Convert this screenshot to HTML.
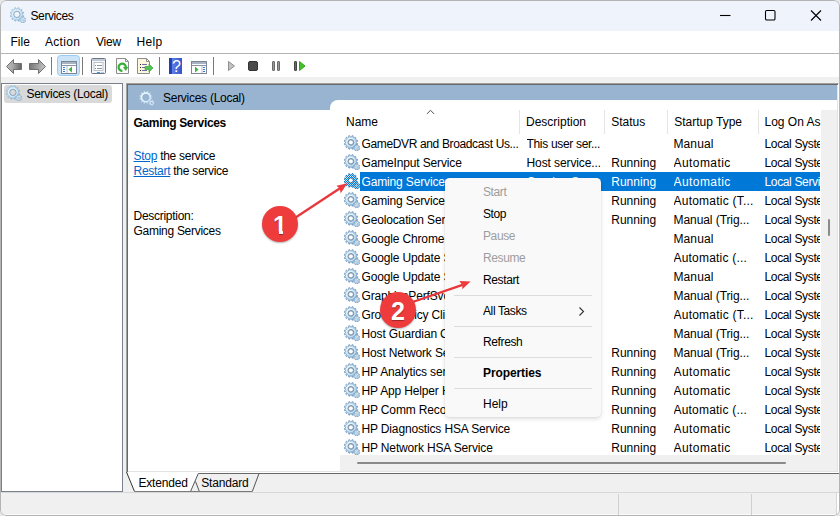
<!DOCTYPE html>
<html lang="en"><head><meta charset="utf-8"><title>Services</title>
<style>
html,body{margin:0;padding:0}
body{width:840px;height:516px;overflow:hidden;background:#e6e6e6;font-family:"Liberation Sans",sans-serif;font-size:12px;color:#000;position:relative}
.abs{position:absolute}
.win{position:absolute;left:0;top:0;width:840px;height:516px;border-radius:6px;background:#f0f0f0;overflow:hidden}
.winb{position:absolute;left:0;top:0;width:838px;height:514px;border:1px solid #b4b4b4;border-radius:6px;pointer-events:none}
.title{position:absolute;left:0;top:0;width:840px;height:31px;background:#eff3fb}
.title .tt{position:absolute;left:30.500px;top:9px;font-size:12px;line-height:14px;letter-spacing:-0.4px}
.menubar{position:absolute;left:0;top:31px;width:840px;height:22px;background:#fff}
.menubar span{position:absolute;top:4px;line-height:14px}
.tbline{position:absolute;left:0;top:53px;width:840px;height:1px;background:#b4b4b4}
.toolbar{position:absolute;left:0;top:54px;width:840px;height:23px;background:#fff}
.lpane{position:absolute;left:1px;top:83px;width:120px;height:407px;background:#fff;border:1px solid #7a808e}
.lsel{position:absolute;left:2px;top:1px;width:108px;height:18px;background:#d9d9d9;border-radius:3px}
.lsel span{position:absolute;left:22.500px;top:2px;line-height:14px;white-space:nowrap;letter-spacing:-0.29px}
.rpane{position:absolute;left:126px;top:83px;width:713px;height:390px;background:#fff;box-sizing:border-box;border-left:1px solid #a0a0a0;border-top:1px solid #a0a0a0;border-right:1px solid #fff;border-bottom:1px solid #fff;box-shadow:inset 1px 1px 0 #696969,inset -1px -1px 0 #e3e3e3}
.rhead{position:absolute;left:1px;top:1px;width:709px;height:25px;background:#99b4d1}
.rhead span{position:absolute;left:35px;top:6px;line-height:14px;white-space:nowrap;letter-spacing:-0.27px}
.ext b{position:absolute;left:6.500px;top:32px;line-height:14px;white-space:nowrap;letter-spacing:-0.33px}
.ext .t{position:absolute;left:6.500px;line-height:14px;white-space:nowrap;letter-spacing:-0.28px}
.ext u{color:#0066cc}
.list{position:absolute;left:330px;top:100px;width:507px;height:371px;background:#fff;border-top-left-radius:8px;overflow:hidden}
.hdr{position:absolute;top:15px;line-height:14px;white-space:nowrap}
.hsep{position:absolute;top:10px;width:1px;height:24px;background:#e5e5e5}
.row{position:absolute;left:0;width:490px;height:19px;white-space:nowrap}
.row .gi{position:absolute;left:14px;top:1px}
.row .c{position:absolute;top:3px;line-height:14px;overflow:hidden;white-space:nowrap}
.c1{left:31.500px;width:157px;letter-spacing:-0.15px}
.c2{left:196.500px;width:73px;letter-spacing:-0.1px}
.c3{left:281.200px;letter-spacing:0.03px}
.c4{left:343.500px;letter-spacing:0.1px}
.c5{left:434.500px;width:55.500px;letter-spacing:-0.35px}
.row.sel{color:#fff}
.row.sel::before{content:"";position:absolute;left:30px;top:0;width:460px;height:19px;background:#0078d7}
.vsb{position:absolute;left:491px;top:10px;width:16px;height:345px;background:#f0f0f0}
.vthumb{position:absolute;left:7px;top:109px;width:2px;height:17px;background:#8a8a8a;border-radius:1px}
.hsb{position:absolute;left:10px;top:355px;width:497px;height:16px;background:#f0f0f0}
.hthumb{position:absolute;left:17px;top:7px;width:429px;height:2px;background:#8a8a8a;border-radius:1px}
.tabs{position:absolute;left:126px;top:472px;width:713px;height:20px}
.status{position:absolute;left:0;top:492px;width:840px;height:24px;background:#f0f0f0;border-top:1px solid #d7d7d7;box-sizing:border-box;box-shadow:inset 0 -2px 0 #fbfbfb}
.ssep{position:absolute;top:1px;width:1px;height:21px;background:#d0d0d0}
.ctx{position:absolute;left:445px;top:178px;width:156px;height:239px;background:#f9f9f9;border-radius:4.500px;box-shadow:0 0 0 0.500px rgba(0,0,0,0.05),0 2px 4px rgba(0,0,0,0.13)}
.ctx span{position:absolute;left:38px;line-height:14px;white-space:nowrap;letter-spacing:-0.38px}
.ctx .dis{color:#9d9d9d}
.ctx i{position:absolute;left:9px;width:138px;height:1px;background:#dcdcdc}
.badge{position:absolute;width:36px;height:36px;border-radius:18px;background:#ee3b3b;color:#fff;font-weight:bold;font-size:25px;line-height:39px;text-align:center;box-shadow:0 1px 2px rgba(0,0,0,0.3);text-shadow:0 1px 1px rgba(0,0,0,0.35)}
.b1::before,.b1::after{content:"";position:absolute;top:24.500px;height:5.500px;background:#ee3b3b}
.b1::before{left:10px;width:7px}
.b1::after{left:21px;width:6px}
.status::after{content:"";position:absolute;left:836px;top:0;width:2px;height:22px;background:#fff;border-left:1px solid #d6d6d6}

</style></head>
<body>
<svg width="0" height="0" style="position:absolute">
<defs>
<radialGradient id="gearg" cx="0.45" cy="0.45" r="0.55"><stop offset="0.45" stop-color="#e6f6fd"/><stop offset="0.72" stop-color="#b5d9f0"/><stop offset="1" stop-color="#74a4d0"/></radialGradient>
<symbol id="gear" viewBox="0 0 16 16">
<path d="M12.27 7.96L13.70 8.55L13.37 9.81L11.83 9.60L11.27 10.57L12.22 11.80L11.30 12.72L10.07 11.77L9.10 12.33L9.31 13.87L8.05 14.20L7.46 12.77L6.34 12.77L5.75 14.20L4.49 13.87L4.70 12.33L3.73 11.77L2.50 12.72L1.58 11.80L2.53 10.57L1.97 9.60L0.43 9.81L0.10 8.55L1.53 7.96L1.53 6.84L0.10 6.25L0.43 4.99L1.97 5.20L2.53 4.23L1.58 3.00L2.50 2.08L3.73 3.03L4.70 2.47L4.49 0.93L5.75 0.60L6.34 2.03L7.46 2.03L8.05 0.60L9.31 0.93L9.10 2.47L10.07 3.03L11.30 2.08L12.22 3.00L11.27 4.23L11.83 5.20L13.37 4.99L13.70 6.25L12.27 6.84ZM4.50 7.40A2.4 2.4 0 1 0 9.30 7.40A2.4 2.4 0 1 0 4.50 7.40Z" fill="url(#gearg)" fill-rule="evenodd" stroke="#7397ba" stroke-width="0.7" stroke-linejoin="round"/>
<circle cx="6.9" cy="7.4" r="2.95" fill="none" stroke="#75879b" stroke-width="0.9"/>
<path d="M14.87 13.26L15.79 13.72L15.47 14.51L14.49 14.18L13.98 14.69L14.31 15.67L13.52 15.99L13.06 15.07L12.34 15.07L11.88 15.99L11.09 15.67L11.42 14.69L10.91 14.18L9.93 14.51L9.61 13.72L10.53 13.26L10.53 12.54L9.61 12.08L9.93 11.29L10.91 11.62L11.42 11.11L11.09 10.13L11.88 9.81L12.34 10.73L13.06 10.73L13.52 9.81L14.31 10.13L13.98 11.11L14.49 11.62L15.47 11.29L15.79 12.08L14.87 12.54ZM11.70 12.90A1.0 1.0 0 1 0 13.70 12.90A1.0 1.0 0 1 0 11.70 12.90Z" fill="url(#gearg)" fill-rule="evenodd" stroke="#7397ba" stroke-width="0.55" stroke-linejoin="round"/>
</symbol>
<radialGradient id="gearrg" cx="0.45" cy="0.45" r="0.55"><stop offset="0.5" stop-color="#dff3fc"/><stop offset="0.75" stop-color="#bfe2f5"/><stop offset="1" stop-color="#86b2d8"/></radialGradient>
<symbol id="gearr" viewBox="0 0 16 16">
<path d="M12.36 8.06L13.68 8.66L13.40 9.70L11.96 9.56L11.30 10.70L12.15 11.88L11.38 12.65L10.20 11.80L9.06 12.46L9.20 13.90L8.16 14.18L7.56 12.86L6.24 12.86L5.64 14.18L4.60 13.90L4.74 12.46L3.60 11.80L2.42 12.65L1.65 11.88L2.50 10.70L1.84 9.56L0.40 9.70L0.12 8.66L1.44 8.06L1.44 6.74L0.12 6.14L0.40 5.10L1.84 5.24L2.50 4.10L1.65 2.92L2.42 2.15L3.60 3.00L4.74 2.34L4.60 0.90L5.64 0.62L6.24 1.94L7.56 1.94L8.16 0.62L9.20 0.90L9.06 2.34L10.20 3.00L11.38 2.15L12.15 2.92L11.30 4.10L11.96 5.24L13.40 5.10L13.68 6.14L12.36 6.74ZM3.80 7.40A3.1 3.1 0 1 0 10.00 7.40A3.1 3.1 0 1 0 3.80 7.40Z" fill="url(#gearrg)" fill-rule="evenodd" stroke="#86a8c8" stroke-width="0.5" stroke-linejoin="round"/>
<circle cx="6.9" cy="7.4" r="3.25" fill="none" stroke="#7d8ea2" stroke-width="0.55"/>
<path d="M14.87 13.26L15.79 13.72L15.47 14.51L14.49 14.18L13.98 14.69L14.31 15.67L13.52 15.99L13.06 15.07L12.34 15.07L11.88 15.99L11.09 15.67L11.42 14.69L10.91 14.18L9.93 14.51L9.61 13.72L10.53 13.26L10.53 12.54L9.61 12.08L9.93 11.29L10.91 11.62L11.42 11.11L11.09 10.13L11.88 9.81L12.34 10.73L13.06 10.73L13.52 9.81L14.31 10.13L13.98 11.11L14.49 11.62L15.47 11.29L15.79 12.08L14.87 12.54ZM11.70 12.90A1.0 1.0 0 1 0 13.70 12.90A1.0 1.0 0 1 0 11.70 12.90Z" fill="url(#gearrg)" fill-rule="evenodd" stroke="#86a8c8" stroke-width="0.5" stroke-linejoin="round"/>
</symbol>
<radialGradient id="gearhg" cx="0.45" cy="0.45" r="0.55"><stop offset="0.5" stop-color="#e9f7fe"/><stop offset="0.75" stop-color="#cfe9f8"/><stop offset="1" stop-color="#abcde8"/></radialGradient>
<symbol id="gearh" viewBox="0 0 16 16">
<path d="M12.36 8.06L13.68 8.66L13.40 9.70L11.96 9.56L11.30 10.70L12.15 11.88L11.38 12.65L10.20 11.80L9.06 12.46L9.20 13.90L8.16 14.18L7.56 12.86L6.24 12.86L5.64 14.18L4.60 13.90L4.74 12.46L3.60 11.80L2.42 12.65L1.65 11.88L2.50 10.70L1.84 9.56L0.40 9.70L0.12 8.66L1.44 8.06L1.44 6.74L0.12 6.14L0.40 5.10L1.84 5.24L2.50 4.10L1.65 2.92L2.42 2.15L3.60 3.00L4.74 2.34L4.60 0.90L5.64 0.62L6.24 1.94L7.56 1.94L8.16 0.62L9.20 0.90L9.06 2.34L10.20 3.00L11.38 2.15L12.15 2.92L11.30 4.10L11.96 5.24L13.40 5.10L13.68 6.14L12.36 6.74ZM3.80 7.40A3.1 3.1 0 1 0 10.00 7.40A3.1 3.1 0 1 0 3.80 7.40Z" fill="url(#gearhg)" fill-rule="evenodd" stroke="#9dbbd8" stroke-width="0.5" stroke-linejoin="round"/>
<circle cx="6.9" cy="7.4" r="3.25" fill="none" stroke="#90a8c4" stroke-width="0.55"/>
<path d="M14.87 13.26L15.79 13.72L15.47 14.51L14.49 14.18L13.98 14.69L14.31 15.67L13.52 15.99L13.06 15.07L12.34 15.07L11.88 15.99L11.09 15.67L11.42 14.69L10.91 14.18L9.93 14.51L9.61 13.72L10.53 13.26L10.53 12.54L9.61 12.08L9.93 11.29L10.91 11.62L11.42 11.11L11.09 10.13L11.88 9.81L12.34 10.73L13.06 10.73L13.52 9.81L14.31 10.13L13.98 11.11L14.49 11.62L15.47 11.29L15.79 12.08L14.87 12.54ZM11.70 12.90A1.0 1.0 0 1 0 13.70 12.90A1.0 1.0 0 1 0 11.70 12.90Z" fill="url(#gearhg)" fill-rule="evenodd" stroke="#9dbbd8" stroke-width="0.5" stroke-linejoin="round"/>
</symbol>
<pattern id="chk" patternUnits="userSpaceOnUse" width="2" height="2"><rect x="0" y="0" width="1" height="1" fill="#0078d7"/><rect x="1" y="1" width="1" height="1" fill="#0078d7"/></pattern>
<symbol id="gears" viewBox="0 0 16 16">
<use href="#gear"/>
<path d="M12.27 7.96L13.70 8.55L13.37 9.81L11.83 9.60L11.27 10.57L12.22 11.80L11.30 12.72L10.07 11.77L9.10 12.33L9.31 13.87L8.05 14.20L7.46 12.77L6.34 12.77L5.75 14.20L4.49 13.87L4.70 12.33L3.73 11.77L2.50 12.72L1.58 11.80L2.53 10.57L1.97 9.60L0.43 9.81L0.10 8.55L1.53 7.96L1.53 6.84L0.10 6.25L0.43 4.99L1.97 5.20L2.53 4.23L1.58 3.00L2.50 2.08L3.73 3.03L4.70 2.47L4.49 0.93L5.75 0.60L6.34 2.03L7.46 2.03L8.05 0.60L9.31 0.93L9.10 2.47L10.07 3.03L11.30 2.08L12.22 3.00L11.27 4.23L11.83 5.20L13.37 4.99L13.70 6.25L12.27 6.84ZM4.50 7.40A2.4 2.4 0 1 0 9.30 7.40A2.4 2.4 0 1 0 4.50 7.40Z" fill="url(#chk)" fill-rule="evenodd" stroke="url(#chk)" stroke-width="0.7"/>
<path d="M14.87 13.26L15.79 13.72L15.47 14.51L14.49 14.18L13.98 14.69L14.31 15.67L13.52 15.99L13.06 15.07L12.34 15.07L11.88 15.99L11.09 15.67L11.42 14.69L10.91 14.18L9.93 14.51L9.61 13.72L10.53 13.26L10.53 12.54L9.61 12.08L9.93 11.29L10.91 11.62L11.42 11.11L11.09 10.13L11.88 9.81L12.34 10.73L13.06 10.73L13.52 9.81L14.31 10.13L13.98 11.11L14.49 11.62L15.47 11.29L15.79 12.08L14.87 12.54ZM11.70 12.90A1.0 1.0 0 1 0 13.70 12.90A1.0 1.0 0 1 0 11.70 12.90Z" fill="url(#chk)" fill-rule="evenodd" stroke="url(#chk)" stroke-width="0.55"/>
</symbol>
</defs>
</svg>
<div class="win">
<div class="title">
<svg class="abs" style="left:9.5px;top:6.7px" width="16" height="16" viewBox="0 0 16 16"><use href="#gearr"/></svg>
<span class="tt">Services</span>
<svg class="abs" style="left:701px;top:1px" width="138" height="30" viewBox="0 0 138 30">
<path d="M19 14.5h10.5" stroke="#000" stroke-width="1.1" fill="none"/>
<rect x="64.5" y="9.5" width="9.5" height="9.5" rx="1.3" fill="none" stroke="#000" stroke-width="1.1"/>
<path d="M110 9.500l10 10M120 9.500l-10 10" stroke="#000" stroke-width="1.100" fill="none"/>
</svg>
</div>
<div class="menubar"><span style="left:10.500px">File</span><span style="left:45px;letter-spacing:0.3px">Action</span><span style="left:96px;letter-spacing:-0.2px">View</span><span style="left:136.500px;letter-spacing:0.35px">Help</span></div>
<div class="tbline"></div>
<div class="toolbar">
<!--TB0-->
<svg class="abs" style="left:0;top:0" width="320" height="23" viewBox="0 54 320 23">
<defs>
<linearGradient id="ag" x1="0" y1="0" x2="1" y2="0.15"><stop offset="0" stop-color="#c2c2c2"/><stop offset="0.5" stop-color="#a6a6a6"/><stop offset="1" stop-color="#6a6a6a"/></linearGradient><linearGradient id="ag2" x1="0" y1="0" x2="1" y2="0.15"><stop offset="0" stop-color="#707070"/><stop offset="0.5" stop-color="#999"/><stop offset="1" stop-color="#c2c2c2"/></linearGradient>
<linearGradient id="hg" x1="0" y1="0" x2="1" y2="0"><stop offset="0" stop-color="#1f3fae"/><stop offset="0.22" stop-color="#2444b8"/><stop offset="0.23" stop-color="#5f7fe6"/><stop offset="1" stop-color="#3554cc"/></linearGradient>
</defs>
<!-- back / forward -->
<path d="M6.500 66.500L13.500 59.500V63.500H21.500V69.500H13.500V73.500Z" fill="url(#ag)" stroke="#6f6f6f" stroke-width="1" stroke-linejoin="round"/>
<path d="M45.500 66.500L38.500 59.500V63.500H29.500V69.500H38.500V73.500Z" fill="url(#ag2)" stroke="#6f6f6f" stroke-width="1" stroke-linejoin="round"/>
<rect x="51" y="57" width="1" height="18" fill="#7a7a7a"/>
<!-- selected button -->
<rect x="57.500" y="55.500" width="22" height="20" rx="3" fill="#cce4f7" stroke="#99ccf5"/>
<g>
<rect x="61.500" y="61.500" width="15" height="12" fill="#fff" stroke="#7d8694"/>
<rect x="62" y="62" width="14" height="2" fill="#a9b2c2"/>
<rect x="62" y="65" width="14" height="1" fill="#8a93a3"/>
<rect x="66.500" y="66" width="1" height="7" fill="#b8bfcb"/>
<rect x="63" y="67" width="2" height="1" fill="#3b78d8"/><rect x="63" y="69" width="2" height="1" fill="#3b78d8"/><rect x="63" y="71" width="2" height="1" fill="#3b78d8"/>
<path d="M72 66.500v6l-3.500-3z" fill="#3db33d"/>
</g>
<rect x="82" y="57" width="1" height="18" fill="#7a7a7a"/>
<!-- properties window -->
<g>
<rect x="91.500" y="58.500" width="14" height="15" rx="1" fill="#f4f6fa" stroke="#6d7584"/>
<rect x="92" y="59" width="13" height="2" fill="#c2c9d6"/>
<rect x="94" y="62.500" width="9" height="8" fill="#fff" stroke="#aab2c0" stroke-width="0.800"/>
<rect x="95" y="65" width="1" height="1" fill="#2a9df4"/><rect x="95" y="68" width="1" height="1" fill="#2a9df4"/>
<rect x="97" y="65" width="5" height="1" fill="#8d95a5"/><rect x="97" y="68" width="5" height="1" fill="#8d95a5"/>
<rect x="97" y="72" width="3" height="1" fill="#2a9df4"/><rect x="101" y="72" width="3" height="1" fill="#c2c9d6"/>
</g>
<!-- refresh page -->
<g>
<path d="M116.500 58.500H125.500L128.500 61.500V73.500H116.500Z" fill="#fbfbfb" stroke="#8d8d8d"/>
<path d="M125.500 58.500V61.500H128.500" fill="none" stroke="#8d8d8d"/>
<path d="M125.800 67.200A3.600 3.600 0 1 0 122.400 70.800" fill="none" stroke="#35b035" stroke-width="2.200"/>
<path d="M123 67h5.200l-2.400 4z" fill="#35b035"/>
</g>
<!-- export list -->
<g>
<path d="M137.500 58.500H146.500L149.500 61.500V73.500H137.500Z" fill="#fbf6dc" stroke="#8d8d8d"/>
<path d="M146.500 58.500V61.500H149.500" fill="none" stroke="#8d8d8d"/>
<rect x="140" y="64" width="1" height="1" fill="#222"/><rect x="140" y="67" width="1" height="1" fill="#222"/><rect x="140" y="70" width="1" height="1" fill="#222"/>
<rect x="142" y="64" width="5" height="1" fill="#6d6da8"/><rect x="142" y="67" width="4" height="1" fill="#6d6da8"/><rect x="142" y="70" width="5" height="1" fill="#6d6da8"/>
<path d="M145 66.500h4v-2.500l4 4-4 4v-2.500h-4z" fill="#4fc34f" stroke="#2f9a2f" stroke-width="0.600"/>
</g>
<rect x="159" y="57" width="1" height="18" fill="#7a7a7a"/>
<!-- help -->
<g>
<rect x="169" y="58" width="13" height="16" fill="url(#hg)"/>
<text x="176.500" y="72" font-family="Liberation Sans, sans-serif" font-size="16" fill="#fff" text-anchor="middle">?</text>
</g>
<!-- window w/ play -->
<g>
<rect x="191.500" y="61.500" width="15" height="12" fill="#fff" stroke="#7d8694"/>
<rect x="192" y="62" width="14" height="2" fill="#a9b2c2"/>
<rect x="192" y="65" width="14" height="1" fill="#8a93a3"/>
<rect x="201.500" y="66" width="1" height="7" fill="#b8bfcb"/>
<rect x="203" y="67" width="2" height="1" fill="#3b78d8"/><rect x="203" y="69" width="2" height="1" fill="#3b78d8"/><rect x="203" y="71" width="2" height="1" fill="#3b78d8"/>
<path d="M195 66.500v6l3.500-3z" fill="#3db33d"/>
</g>
<rect x="213" y="57" width="1" height="18" fill="#7a7a7a"/>
<!-- play -->
<path d="M228.500 61.500V70.500L234.500 66Z" fill="#c4c4c4" stroke="#8e8e8e" stroke-linejoin="round"/>
<!-- stop -->
<rect x="248.500" y="61.500" width="9" height="9" rx="1.500" fill="#4b4b4b" stroke="#333"/>
<!-- pause -->
<rect x="272.500" y="61.500" width="2" height="9" rx="0.500" fill="#9a9a9a" stroke="#6a6a6a"/>
<rect x="277.500" y="61.500" width="2" height="9" rx="0.500" fill="#9a9a9a" stroke="#6a6a6a"/>
<!-- resume -->
<rect x="294.500" y="61.500" width="2" height="9" rx="0.500" fill="#6a6a6a" stroke="#444"/>
<path d="M299.500 61.500V70.500L305 66Z" fill="#45c02a" stroke="#2fa516" stroke-linejoin="round"/>
</svg>
<!--TB1-->
</div>
<div class="lpane"><div class="lsel"><svg class="abs" style="left:2px;top:0.3px" width="16" height="16" viewBox="0 0 16 16"><use href="#gearr"/></svg><span>Services (Local)</span></div></div>
<div class="rpane">
<div class="rhead"><svg class="abs" style="left:11px;top:5px" width="16" height="16" viewBox="0 0 16 16"><use href="#gearh"/></svg><span>Services (Local)</span></div>
<div class="ext">
<b>Gaming Services</b>
<span class="t" style="top:65px"><u>Stop</u> the service</span>
<span class="t" style="top:80px"><u>Restart</u> the service</span>
<span class="t" style="top:125px">Description:</span>
<span class="t" style="top:140px">Gaming Services</span>
</div>
</div>
<div class="list">
<div class="row" style="top:34px"><svg class="gi" width="16" height="16" viewBox="0 0 16 16"><use href="#gear"/></svg><span class="c c1" style="letter-spacing:-0.36px">GameDVR and Broadcast Us...</span><span class="c c2" style="letter-spacing:-0.32px">This user ser...</span><span class="c c3"></span><span class="c c4" style="letter-spacing:0.1px">Manual</span><span class="c c5">Local Syste</span></div>
<div class="row" style="top:53px"><svg class="gi" width="16" height="16" viewBox="0 0 16 16"><use href="#gear"/></svg><span class="c c1">GameInput Service</span><span class="c c2">Host service...</span><span class="c c3">Running</span><span class="c c4" style="letter-spacing:0.43px">Automatic</span><span class="c c5">Local Syste</span></div>
<div class="row sel" style="top:72px"><svg class="gi" width="16" height="16" viewBox="0 0 16 16"><use href="#gears"/></svg><span class="c c1">Gaming Services</span><span class="c c2">Gaming Ser...</span><span class="c c3">Running</span><span class="c c4" style="letter-spacing:0.43px">Automatic</span><span class="c c5">Local Servi</span></div>
<div class="row" style="top:91px"><svg class="gi" width="16" height="16" viewBox="0 0 16 16"><use href="#gear"/></svg><span class="c c1">Gaming Services</span><span class="c c2"></span><span class="c c3">Running</span><span class="c c4" style="letter-spacing:0.23px">Automatic (T...</span><span class="c c5">Local Syste</span></div>
<div class="row" style="top:110px"><svg class="gi" width="16" height="16" viewBox="0 0 16 16"><use href="#gear"/></svg><span class="c c1">Geolocation Service</span><span class="c c2"></span><span class="c c3">Running</span><span class="c c4" style="letter-spacing:-0.07px">Manual (Trig...</span><span class="c c5">Local Syste</span></div>
<div class="row" style="top:129px"><svg class="gi" width="16" height="16" viewBox="0 0 16 16"><use href="#gear"/></svg><span class="c c1">Google Chrome Elevation</span><span class="c c2"></span><span class="c c3"></span><span class="c c4" style="letter-spacing:0.1px">Manual</span><span class="c c5">Local Syste</span></div>
<div class="row" style="top:148px"><svg class="gi" width="16" height="16" viewBox="0 0 16 16"><use href="#gear"/></svg><span class="c c1">Google Update Service</span><span class="c c2"></span><span class="c c3"></span><span class="c c4" style="letter-spacing:0.2px">Automatic (...</span><span class="c c5">Local Syste</span></div>
<div class="row" style="top:167px"><svg class="gi" width="16" height="16" viewBox="0 0 16 16"><use href="#gear"/></svg><span class="c c1">Google Update Service</span><span class="c c2"></span><span class="c c3"></span><span class="c c4" style="letter-spacing:0.1px">Manual</span><span class="c c5">Local Syste</span></div>
<div class="row" style="top:186px"><svg class="gi" width="16" height="16" viewBox="0 0 16 16"><use href="#gear"/></svg><span class="c c1">GraphicsPerfSvc</span><span class="c c2"></span><span class="c c3"></span><span class="c c4" style="letter-spacing:-0.07px">Manual (Trig...</span><span class="c c5">Local Syste</span></div>
<div class="row" style="top:205px"><svg class="gi" width="16" height="16" viewBox="0 0 16 16"><use href="#gear"/></svg><span class="c c1">Group Policy Client</span><span class="c c2"></span><span class="c c3"></span><span class="c c4" style="letter-spacing:0.23px">Automatic (T...</span><span class="c c5">Local Syste</span></div>
<div class="row" style="top:224px"><svg class="gi" width="16" height="16" viewBox="0 0 16 16"><use href="#gear"/></svg><span class="c c1">Host Guardian Client</span><span class="c c2"></span><span class="c c3"></span><span class="c c4" style="letter-spacing:-0.07px">Manual (Trig...</span><span class="c c5">Local Syste</span></div>
<div class="row" style="top:243px"><svg class="gi" width="16" height="16" viewBox="0 0 16 16"><use href="#gear"/></svg><span class="c c1">Host Network Service</span><span class="c c2"></span><span class="c c3">Running</span><span class="c c4" style="letter-spacing:-0.07px">Manual (Trig...</span><span class="c c5">Local Syste</span></div>
<div class="row" style="top:262px"><svg class="gi" width="16" height="16" viewBox="0 0 16 16"><use href="#gear"/></svg><span class="c c1">HP Analytics service</span><span class="c c2"></span><span class="c c3">Running</span><span class="c c4" style="letter-spacing:0.43px">Automatic</span><span class="c c5">Local Syste</span></div>
<div class="row" style="top:281px"><svg class="gi" width="16" height="16" viewBox="0 0 16 16"><use href="#gear"/></svg><span class="c c1">HP App Helper HSA</span><span class="c c2"></span><span class="c c3">Running</span><span class="c c4" style="letter-spacing:0.43px">Automatic</span><span class="c c5">Local Syste</span></div>
<div class="row" style="top:300px"><svg class="gi" width="16" height="16" viewBox="0 0 16 16"><use href="#gear"/></svg><span class="c c1">HP Comm Recovery</span><span class="c c2"></span><span class="c c3">Running</span><span class="c c4" style="letter-spacing:0.2px">Automatic (...</span><span class="c c5">Local Syste</span></div>
<div class="row" style="top:319px"><svg class="gi" width="16" height="16" viewBox="0 0 16 16"><use href="#gear"/></svg><span class="c c1">HP Diagnostics HSA Service</span><span class="c c2"></span><span class="c c3">Running</span><span class="c c4" style="letter-spacing:0.43px">Automatic</span><span class="c c5">Local Syste</span></div>
<div class="row" style="top:338px"><svg class="gi" width="16" height="16" viewBox="0 0 16 16"><use href="#gear"/></svg><span class="c c1">HP Network HSA Service</span><span class="c c2"></span><span class="c c3">Running</span><span class="c c4" style="letter-spacing:0.43px">Automatic</span><span class="c c5">Local Syste</span></div>
</div>
<div class="list" style="background:none;pointer-events:none">
<span class="hdr" style="left:16px">Name</span>
<span class="hdr" style="left:196px">Description</span>
<span class="hdr" style="left:281.2px">Status</span>
<span class="hdr" style="left:344.2px">Startup Type</span>
<span class="hdr" style="left:434.500px">Log On As</span>
<svg class="abs" style="left:96px;top:9px" width="10" height="6" viewBox="0 0 10 6"><path d="M0.9 4.9L4.5 1.3L8.1 4.9" fill="none" stroke="#4a4a4a" stroke-width="1"/></svg>
<div class="hsep" style="left:189px"></div><div class="hsep" style="left:274px"></div><div class="hsep" style="left:337px"></div><div class="hsep" style="left:428px"></div>
<div class="vsb"><div class="vthumb"></div></div>
<div class="hsb"><div class="hthumb"></div></div>
</div>
<div class="tabs">
<svg width="713" height="20" viewBox="0 0 713 20">
<path d="M72 1.500H713" stroke="#696969" stroke-width="1" fill="none"/>
<path d="M0.500 0H73L64.500 19.500H8.500Z" fill="#fff" stroke="none"/>
<path d="M0.500 0L8.500 19.500" stroke="#333" fill="none"/>
<path d="M64.500 19.500L72.300 1.500" stroke="#555" fill="none"/>
<path d="M69.500 9.500L73.400 19.500" stroke="#555" fill="none"/>
<path d="M126.300 19.500L133 1.500" stroke="#555" fill="none"/>
<path d="M8.500 19.500H126.300" stroke="#7a7a7a" fill="none"/>
<text x="12.500" y="15" font-size="12" letter-spacing="-0.2" font-family="Liberation Sans, sans-serif">Extended</text>
<text x="75.3" y="15" font-size="12" letter-spacing="-0.2" font-family="Liberation Sans, sans-serif">Standard</text>
</svg>
</div>
<div class="status"><div class="ssep" style="left:618px"></div><div class="ssep" style="left:751px"></div></div>
<div class="ctx">
<span class="dis" style="top:7px">Start</span>
<span style="top:29px">Stop</span>
<span class="dis" style="top:51px">Pause</span>
<span class="dis" style="top:73px">Resume</span>
<span style="top:95px">Restart</span>
<i style="top:117px"></i>
<span style="top:126px">All Tasks</span>
<svg class="abs" style="left:133px;top:128px" width="7" height="11" viewBox="0 0 7 11"><path d="M1.500 1.500l4 4-4 4" fill="none" stroke="#333" stroke-width="1.100"/></svg>
<i style="top:148px"></i>
<span style="top:157px">Refresh</span>
<i style="top:179px"></i>
<span style="top:188px;font-weight:bold;letter-spacing:-0.1px">Properties</span>
<i style="top:210px"></i>
<span style="top:219px;letter-spacing:0">Help</span>
</div>
<svg class="abs" style="left:0;top:0" width="840" height="516" viewBox="0 0 840 516">
<path d="M288 222.500L340 188.200" stroke="#e9383c" stroke-width="2.300" fill="none"/>
<path d="M347.400 183.300L336.500 185.800L339.700 188.400L340.700 193.200Z" fill="#ee393d"/>
<path d="M404 305L462.500 284.900" stroke="#e9383c" stroke-width="2.300" fill="none"/>
<path d="M470.600 281.500L459.300 281.100L462.300 285L462.300 289.200Z" fill="#ee393d"/>
</svg>
<div class="badge b1" style="left:262px;top:206px">1</div>
<div class="badge" style="left:380px;top:292px">2</div>
<div class="winb"></div>
</div>
</body></html>
